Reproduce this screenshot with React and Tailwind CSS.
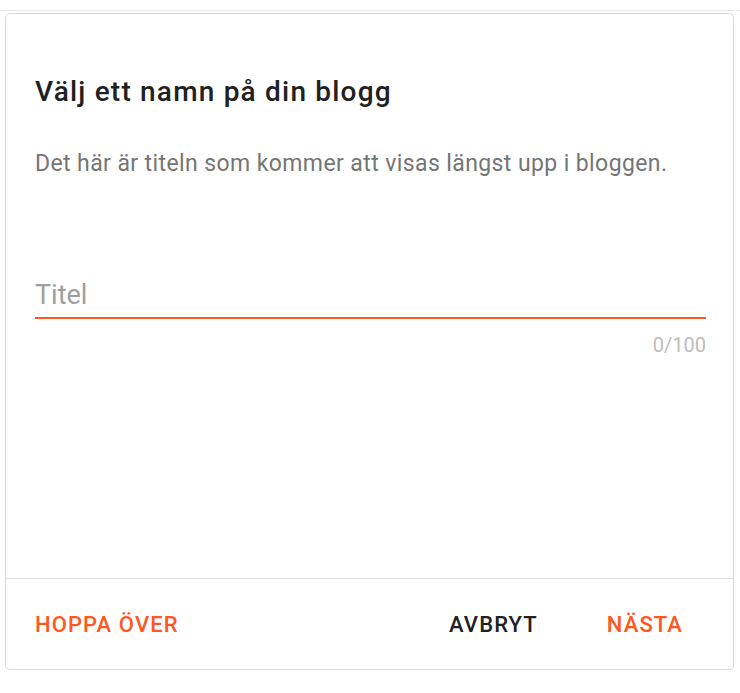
import { useState } from "react";

export default function App() {
  const [title, setTitle] = useState("");

  return (
    <main className="min-h-screen bg-white font-['Roboto','Liberation_Sans',sans-serif]">
      <div className="h-[11px] border-b border-[#e6e8eb]" />
      <section className="mx-[5px] mt-[2px] flex h-[657px] w-[729px] flex-col rounded-[5px] border border-[#d3dbe1] bg-white">
        <div className="flex-1 pl-[29px] pr-[27px] pt-[62px]">
          <h1 className="text-[28px] font-medium leading-[32px] tracking-[1.2px] text-[#212121]">Välj ett namn på din blogg</h1>
          <p className="mt-[42px] text-[23px] leading-[28px] tracking-[0.4px] text-[#757575]">
            Det här är titeln som kommer att visas längst upp i bloggen.
          </p>

          <div className="mt-[101px]">
            <input
              type="text"
              value={title}
              maxLength={100}
              onChange={(event) => setTitle(event.target.value)}
              placeholder="Titel"
              className="block h-[40px] w-full border-b-2 border-[#ff5722] bg-transparent pb-[6px] text-[27px] leading-[34px] text-[#212121] outline-none placeholder:text-[#9e9e9e]"
            />
            <p className="mt-[14px] text-right text-[20px] leading-[24px] text-[#bdbdbd]">{title.length}/100</p>
          </div>
        </div>

        <footer className="flex h-[91px] items-center border-t border-[#dfe1e4] pl-[29px] pr-[50px]">
          <button type="button" className="text-[22px] font-medium uppercase tracking-[1.1px] text-[#ff5722]">
            Hoppa över
          </button>
          <div className="ml-auto flex items-center gap-[69px]">
            <button type="button" className="text-[22px] font-medium uppercase tracking-[1.1px] text-[#212121]">
              Avbryt
            </button>
            <button type="button" className="text-[22px] font-medium uppercase tracking-[1.1px] text-[#ff5722]">
              Nästa
            </button>
          </div>
        </footer>
      </section>
    </main>
  );
}
